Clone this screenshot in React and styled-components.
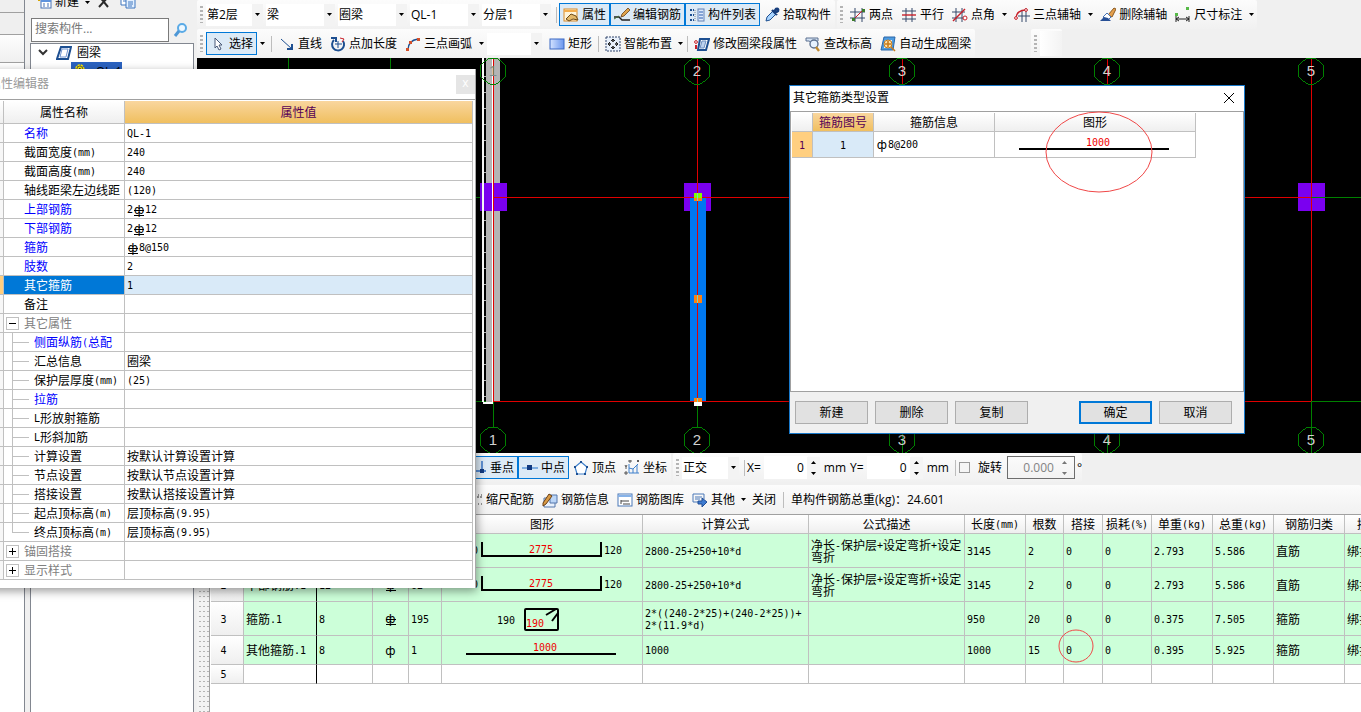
import { Fragment, useState } from "react";
import styled, { createGlobalStyle, css } from "styled-components";

const GlobalStyle = createGlobalStyle`
  * { box-sizing: border-box; }
  body {
    margin: 0;
    background: #f0f0f0;
    color: #000;
    font: 12px/16px "Open Sans", "Noto Sans CJK SC", sans-serif;
    overflow: hidden;
  }
  button, input, select { font: inherit; color: inherit; margin: 0; }
  table { border-collapse: separate; border-spacing: 0; table-layout: fixed; }
`;

const GRID = "#c0c0c0";
const headerFill = "linear-gradient(#ffffff, #efefef)";
const activeFill = "linear-gradient(#f9d69e, #f0bf5f)";

const Page = styled.div`
  position: relative;
  display: flex;
  height: 100vh;
  overflow: hidden;
`;

/* ---------- left side ---------- */

const NavRail = styled.nav`
  flex: 0 0 25px;
  margin-right: 5px;
  display: flex;
  flex-direction: column;
  background: #fff;
  border-right: 1px solid #828790;
`;

const NavBlock = styled.div`
  height: ${(p) => p.$h}px;
  background: ${(p) => (p.$light ? "linear-gradient(#fdfdfd, #f0f0f0)" : "#efefef")};
  border-bottom: 1px solid #a0a0a0;
`;

const TreePanel = styled.aside`
  flex: 0 0 164px;
  min-width: 0;
  margin-right: 3px;
  display: flex;
  flex-direction: column;
`;

const TreeTools = styled.div`
  display: flex;
  align-items: center;
  height: 32px;
  margin-top: -14px;
  padding-left: 2px;
`;

const SearchRow = styled.div`
  display: flex;
  align-items: center;
  height: 24px;
`;

const SearchInput = styled.input`
  flex: 0 0 138px;
  min-width: 0;
  width: 138px;
  height: 24px;
  margin-left: 1px;
  padding: 0 3px 3px;
  border: 1px solid #7a7a7a;
  background: #fff;
  outline: 0;
  &::placeholder { color: #777; opacity: 1; }
`;

const TreeBody = styled.div`
  flex: 1;
  margin-top: 1px;
  background: #fff;
  border: 1px solid #828790;
  border-bottom: 0;
`;

const TreeRow = styled.div`
  display: flex;
  align-items: center;
  gap: 5px;
  height: 18px;
  padding-left: ${(p) => (p.$child ? 40 : 6)}px;
  white-space: nowrap;
`;

const TreeSelected = styled.span`
  display: flex;
  align-items: flex-start;
  gap: 10px;
  width: 51px;
  height: 18px;
  padding-left: 3px;
  background: #2a62c0;
  line-height: 20px;
`;

/* ---------- toolbars ---------- */

const Main = styled.main`
  flex: 1;
  min-width: 0;
  display: flex;
  flex-direction: column;
`;

const ToolRow = styled.div`
  display: flex;
  flex: 0 0 29px;
  gap: 2px;
  ${(p) => p.$spaced && "margin-bottom: 3px;"}
`;

const ToolGroup = styled.div`
  display: flex;
  align-items: center;
  padding-left: ${(p) => p.$indent || 1}px;
  margin-left: ${(p) => p.$before || 0}px;
  ${(p) => p.$grow && "flex: 1;"}
  background: linear-gradient(#fcfcfc, #f1f1f1);
  border-radius: 2px;
  white-space: nowrap;
`;

const Grip = styled.span`
  width: 3px;
  height: 17px;
  margin: 0 3px 0 2px;
  background: repeating-linear-gradient(#b4b4b4 0 2px, transparent 2px 4px);
`;

const Sep = styled.span`
  width: 1px;
  height: 16px;
  margin: 0 ${(p) => (p.$tight ? 2 : 3)}px;
  background: #bdbdbd;
`;

const ToolButton = styled.button`
  display: flex;
  align-items: center;
  gap: 3px;
  height: 23px;
  padding: 0 3px;
  border: 1px solid ${(p) => (p.$on ? "#0078d7" : "transparent")};
  background: ${(p) => (p.$on ? "#dceaf6" : "transparent")};
`;

const CaretButton = styled.button`
  display: flex;
  align-items: center;
  justify-content: center;
  width: ${(p) => (p.$narrow ? 9 : 11)}px;
  height: 23px;
  padding: 0;
  border: 0;
  background: transparent;
`;

const ComboBox = styled.span`
  display: grid;
  grid-template-columns: 1fr 11px;
  align-items: center;
  width: ${(p) => p.$w}px;
  height: 22px;
  margin-right: 3px;
  background: linear-gradient(to left, #f3f3f3 11px, #fff 11px);
  & > svg { grid-area: 1 / 2; justify-self: center; pointer-events: none; }
`;

const ComboSelect = styled.select`
  grid-area: 1 / 1 / 2 / 3;
  height: 22px;
  padding: 0 12px 0 1px;
  border: 0;
  appearance: none;
  background: transparent;
  outline: 0;
`;

const Field = styled.label`
  display: flex;
  align-items: center;
  gap: 3px;
`;

const NumberInput = styled.input`
  width: 44px;
  height: 23px;
  padding: 0 4px;
  border: 0;
  background: #fff;
  text-align: right;
  outline: 0;
  &:disabled { background: transparent; color: #838383; width: 50px; }
`;

const Spinner = styled.span`
  display: flex;
  flex-direction: column;
  width: 13px;
  margin: 0 4px 0 -1px;
  background: #f5f5f5;
  ${(p) => p.$off && "background: transparent; margin: 0;"}
`;

const SpinButton = styled.button`
  display: flex;
  align-items: center;
  justify-content: center;
  height: 11px;
  padding: 0;
  border: 0;
  background: transparent;
  color: #000;
  &:disabled { color: #777; }
`;

const Unit = styled.span`
  margin-right: 4px;
`;

const RotateBox = styled.span`
  display: flex;
  align-items: center;
  width: 68px;
  height: 23px;
  margin: 0 2px 0 5px;
  border: 1px solid #6d6d6d;
`;

const CheckBox = styled.input`
  appearance: none;
  width: 11px;
  height: 11px;
  margin: 0 5px 0 1px;
  border: 1px solid #9a9a9a;
  background: #f5f5f5;
`;

const Total = styled.span`
  padding-left: 4px;
`;

const Blank = styled.span`
  width: 22px;
  height: 25px;
  background: linear-gradient(to right, #fff, #f3f3f3);
`;

/* ---------- drawing area and the rebar table ---------- */

const CanvasBox = styled.div`
  flex: 0 0 395px;
  background: #000;
  & svg { display: block; }
`;

const Bottom = styled.section`
  flex: 1;
  display: flex;
  min-height: 0;
`;

const Splitter = styled.div`
  flex: 0 0 13px;
  background: radial-gradient(circle, #b4b4b4 1px, transparent 1px) 1px 0 / 4px 5px #f3f3f3;
  border-right: 1px solid #a0a0a0;
`;

const SheetBox = styled.div`
  flex: 1;
  min-width: 0;
  overflow: hidden;
  background: #fff;
  border-top: 1px solid #a0a0a0;
  padding-left: 1px;
`;

const Sheet = styled.table`
  width: 1183px;
`;

const cellBase = css`
  padding: 0 2px;
  border: 0 solid ${GRID};
  border-width: 0 1px 1px 0;
  font: 12px/12px "Noto Sans CJK SC", sans-serif;
  overflow: hidden;
`;

const Th = styled.th`
  ${cellBase}
  height: ${(p) => p.$h || 19}px;
  padding: 0;
  background: ${(p) => (p.$on ? activeFill : headerFill)};
  color: ${(p) => (p.$on ? "#550055" : "#000")};
  text-align: center;
  white-space: nowrap;
`;

const RowNo = styled(Th)`
  padding-right: 7px;
`;

const Td = styled.td`
  ${cellBase}
  position: relative;
  height: ${(p) => p.$h}px;
  background: ${(p) => (p.$filled ? "#ccffd9" : "#fff")};
  text-align: ${(p) => (p.$center ? "center" : "left")};
  word-break: break-all;
  overflow: visible;
  ${(p) => p.$frozen && "border-right-color: #000;"}
  & > svg { display: block; margin: 0 auto; }
`;

const Ascii = styled.span`
  font-family: "DejaVu Sans Mono", monospace;
  font-size: 10px;
  line-height: 0;
  vertical-align: 1px;
`;

const Bar = styled.span`
  position: relative;
  display: inline-block;
  width: 12px;
  height: 12px;
  text-align: center;
  vertical-align: 0;
  font: 12px/12px "DejaVu Sans", sans-serif;
  ${(p) => p.$ribbed && css`
    &::after {
      content: "";
      position: absolute;
      left: 1px;
      right: 1px;
      top: 6px;
      height: 4px;
      border: solid #000;
      border-width: 1px 0;
    }
  `}
`;

const Mark = styled.svg`
  position: absolute;
  left: ${(p) => p.$x}px;
  top: ${(p) => p.$y}px;
  pointer-events: none;
`;

/* ---------- floating windows ---------- */

const EditorWindow = styled.section`
  position: absolute;
  left: -16px;
  top: 69px;
  width: 492px;
  padding-bottom: 8px;
  background: #fff;
  border-right: 1px solid #a8a8a8;
  box-shadow: 1px 3px 9px rgba(0, 0, 0, 0.4);
`;

const EditorTitle = styled.header`
  display: flex;
  align-items: center;
  justify-content: space-between;
  height: 31px;
  padding-left: 5px;
  border-bottom: 1px solid #a0a0a0;
  color: #999;
`;

const EditorClose = styled.button`
  width: 19px;
  height: 19px;
  padding: 0 0 2px;
  border: 0;
  background: #e5e5e5;
  color: #fff;
  line-height: 16px;
`;

const PropTable = styled.table`
  width: 489px;
  margin-top: 1px;
`;

const PropHead = styled.td`
  ${cellBase}
  background: ${(p) => (p.$on ? "#ffcf80" : "#f7f7f7")};
`;

const PropName = styled.td`
  ${cellBase}
  height: 19px;
  padding: 0;
  white-space: nowrap;
  background: ${(p) => (p.$on ? "#0078d7" : "#fff")};
  color: ${(p) => (p.$on ? "#fff" : p.$tone)};
  & > div { display: flex; align-items: center; height: 18px; }
`;

const PropIndent = styled.span`
  flex: 0 0 20px;
  display: flex;
  align-items: center;
  padding-left: 2px;
`;

const Branch = styled.span`
  flex: 0 0 22px;
  height: 19px;
  margin: 0 0 0 8px;
  align-self: flex-start;
  background:
    linear-gradient(${GRID}, ${GRID}) 0 0 / 1px ${(p) => (p.$last ? "10px" : "19px")} no-repeat,
    linear-gradient(${GRID}, ${GRID}) 0 9px / 17px 1px no-repeat;
`;

const Expander = styled.button`
  display: flex;
  align-items: center;
  justify-content: center;
  width: 13px;
  height: 13px;
  padding: 0;
  border: 1px solid ${GRID};
  background: #fff;
`;

const PropValue = styled.td`
  ${cellBase}
  background: ${(p) => (p.$on ? "#d9eaf8" : "#fff")};
`;

const Dialog = styled.section`
  position: absolute;
  left: 789px;
  top: 85px;
  width: 456px;
  background: #f0f0f0;
  border: 1px solid #1979ca;
  box-shadow: 0 2px 6px rgba(0, 0, 0, 0.4);
`;

const DialogTitle = styled.header`
  display: flex;
  align-items: center;
  justify-content: space-between;
  height: 25px;
  padding: 0 9px 1px 3px;
  background: #fff;
`;

const PlainButton = styled.button`
  display: flex;
  padding: 0;
  border: 0;
  background: transparent;
`;

const DialogBody = styled.div`
  height: 281px;
  padding: 1px;
  background: #fff;
  border: 1px solid #a0a0a0;
`;

const DialogTable = styled.table`
  width: 404px;
`;

const DialogCell = styled(Td)`
  ${(p) => p.$tone === "row" && "background: #ffcf80; color: #550055;"}
  ${(p) => p.$tone === "pick" && "background: #d9eaf8;"}
`;

const DialogFooter = styled.footer`
  display: flex;
  align-items: center;
  gap: 7px;
  height: 41px;
  padding: 0 12px 0 5px;
`;

const DialogButton = styled.button`
  width: 73px;
  height: 23px;
  padding: 0;
  border: ${(p) => (p.$primary ? "2px solid #0078d7" : "1px solid #adadad")};
  background: #e1e1e1;
  ${(p) => p.$primary && "margin-left: auto;"}
`;

/* ---------- icons ---------- */

const B = "#1d4f91";
const R = "#c8202a";

const ICONS = {
  pointer: <path d="M5 2v10l2-2 2 4 2-1-2-4h3z" fill="#fff" stroke="#4a5a78" />,
  line: <><path d="M2 3l11 10" stroke={B} /><path d="M13 8v5H8" stroke={B} strokeWidth="2" fill="none" /></>,
  addLength: <><path d="M4 4a6 6 0 1 0 9 1" fill="none" stroke={B} strokeWidth="2" /><path d="M1 2h5v4" fill="none" stroke={B} strokeWidth="2" /><path d="M8 5v7M5 8h7" stroke={B} /><path d="M10 2l4 1-2 3" fill="none" stroke={R} /></>,
  arc: <><path d="M3 14C3 8 6 4 13 3" fill="none" stroke={B} strokeWidth="1.4" /><rect x="1" y="12" width="3" height="3" fill="#d4502a" /><rect x="12" y="2" width="3" height="3" fill="#d4502a" /><rect x="4" y="5" width="3" height="3" fill="#d4502a" /></>,
  rect: <><rect x="1" y="3" width="14" height="10" fill="url(#rectFill)" stroke="#3b68c4" /><linearGradient id="rectFill"><stop stopColor="#d4e3ff" /><stop offset="1" stopColor="#6a96ee" /></linearGradient></>,
  smart: <><rect x="1" y="1" width="14" height="14" fill="#e8f0fb" stroke="#30456b" strokeDasharray="2 1" /><path d="M8 3v3M8 10v3M3 8h3M10 8h3" stroke="#222" strokeWidth="1.6" /><path d="M6 5l2-2 2 2M6 11l2 2 2-2M5 6L3 8l2 2M11 6l2 2-2 2" stroke="#222" /></>,
  editSeg: <><path d="M6 3h9l-3 11H4z" fill="#fff" stroke={B} strokeWidth="2" /><path d="M8 5h4l-2 7H6z" fill="#bcd2ef" stroke="#6d8fc0" /><circle cx="2" cy="6" r="1.4" fill="none" stroke={R} /><path d="M1 9h2v4H1z" fill={R} /></>,
  level: <><path d="M1 2h12v3L9 8 4 5H1z" fill="#d6e4f5" stroke="#5d7190" /><circle cx="9" cy="8" r="4" fill="#e6f2ff" stroke="#5d7190" strokeWidth="1.4" /><path d="M11 11l3 4" stroke="#c08a30" strokeWidth="2.4" /></>,
  auto: <><path d="M4 1h11l-2 13H1z" fill="#4d9be0" stroke="#2a66a8" /><path d="M5 4h7l-1 8H4z" fill="#e9f3fd" /><circle cx="8" cy="8" r="4" fill="#ffe2a8" stroke="#c77b1c" /><path d="M8 5v6M5 8h6M11 11l4 4" stroke="#c77b1c" strokeWidth="1.6" /></>,
  props: <><rect x="1" y="2" width="13" height="12" fill="#fff4d9" stroke="#d98a27" /><path d="M1 3h13v2H1z" fill="#f3ad4d" /><path d="M3 12l5-5 5 2 2 4-5-1-4 2z" fill="#e3b869" stroke="#6d4a18" /></>,
  editRebar: <><path d="M0 10h5l3 3h8" fill="none" stroke="#222" strokeWidth="1.4" /><path d="M7 10l1-3 6-6 2 2-6 6z" fill="#e0a44c" stroke="#694015" strokeWidth=".8" /><path d="M0 12l5-3" stroke="#3f6f39" /></>,
  list: <><path d="M1 3h4M1 8h4M1 13h4" stroke={B} strokeWidth="2" strokeDasharray="2 1" /><path d="M6 3v11" stroke="#8a8a8a" strokeDasharray="1 1" /><rect x="9" y="2" width="6" height="12" fill="#dce9fb" stroke="#6482b4" /><path d="M10 5h4M10 8h4M10 11h4" stroke="#2a5db0" /></>,
  dropper: <><path d="M2 14l1-4 6-6 3 3-6 6z" fill="#a8d4ff" stroke={B} /><path d="M8 3l5 5M10 5l2-3q3-1 2 2l-3 2" fill="none" stroke="#173e7d" strokeWidth="2.4" /></>,
  twoPoint: <><path d="M5 1v14M12 1v14M0 5h15M0 11h15" stroke="#34486b" /><path d="M3 13L13 3" stroke={R} /><path d="M2 11h3v3H2zM12 2h3v3h-3z" fill="#3d7c2b" /></>,
  parallel: <><path d="M1 4h14M1 12h14M5 1v14M11 1v14" stroke="#34486b" /><path d="M1 8h14" stroke={R} strokeWidth="1.4" /></>,
  pointAngle: <><path d="M4 1v14M10 1v14M0 5h13M0 11h14" stroke="#34486b" /><path d="M1 14L13 2" stroke={R} strokeWidth="1.4" /><circle cx="13" cy="11" r="2" fill="#fff" stroke={R} /></>,
  arcAxis: <><path d="M8 4v11M12 1v14M4 9h12" stroke="#34486b" /><path d="M2 11C2 6 6 3 12 3" fill="none" stroke={R} strokeWidth="1.4" /><circle cx="2" cy="11" r="1.4" fill="#fff" stroke={R} /><circle cx="12" cy="3" r="1.4" fill="#fff" stroke={R} /></>,
  eraser: <><path d="M8 8l6-7 2 1-4 8z" fill="#e4a04e" stroke="#8a5a20" /><path d="M3 10l4-4 4 4-4 4z" fill="#fff" stroke="#4773b5" /><path d="M0 14h11l-3-3-4-1z" fill="#274f95" /></>,
  dimension: <><path d="M1 9v6M14 9v6M1 12h13M4 10l-3 2 3 2M11 10l3 2-3 2" fill="none" stroke="#222" /><path d="M0 6h3v3H0zM11 0h3v3h-3z" fill="#56b947" /></>,
  perp: <><path d="M11 1v10M1 11h14" fill="none" stroke="#2a6cc4" strokeWidth="1.4" /><rect x="9" y="9" width="4" height="4" fill="#123a80" /></>,
  mid: <><path d="M0 8h16" stroke="#5794d8" strokeWidth="1.4" /><rect x="5" y="5" width="5" height="5" fill="#123a80" /></>,
  vertex: <><path d="M8 2l6 5-2 7H4L2 7z" fill="#fff" stroke="#3e80cc" strokeWidth="1.2" /><path d="M7 1h2v2H7zM13 6h2v2h-2zM1 6h2v2H1zM3 13h2v2H3zM11 13h2v2h-2z" fill={B} /></>,
  coord: <><path d="M5 4v9h10M5 8l4 1 5-5M9 9v4M13 5v8" fill="none" stroke="#3e80cc" /><path d="M1 5l1 2 1-2M2 7v2M1 12h2v2H1zM5 0h2v2H5zM13 0l2 2M15 0l-2 2" fill="none" stroke="#333" strokeWidth=".8" /></>,
  scale: <path d="M1 3h3M6 3h3M11 3h1M14 3h1M11 4v2M14 4v2M11 12h1M14 12h1" stroke="#333" />,
  info: <><path d="M2 6h11v9H2z" fill="#e9f1fc" stroke="#5577aa" /><path d="M8 3h7v8H8z" fill="#bcd6f7" stroke="#5577aa" /><path d="M1 11l6-9 3 2-6 8-3 2z" fill="#d99a45" stroke="#6a3f14" /></>,
  library: <><rect x="1" y="2" width="14" height="12" fill="#fff" stroke="#4a79b8" /><path d="M1 3h14v2H1z" fill="#86b2e8" /><path d="M4 8v4M4 9h8M6 12h7" stroke="#444" /></>,
  other: <><path d="M1 2h11v5M1 2v8h5M3 5h7M3 7h5" fill="none" stroke="#4a79b8" /><path d="M6 9h4V6l5 4-5 5v-3H6z" fill="#3e7bd0" stroke="#1f4c94" /></>,
  create: <><rect x="5" y="5" width="10" height="9" fill="#fff" stroke="#4a72b4" /><path d="M5 5h10v3H5z" fill="#5f93dd" /><path d="M7 10h2M11 10h2M7 12h2M11 12h2" stroke="#4a72b4" /><path d="M3 0v7M0 3h7" stroke="#d6a400" strokeWidth="2" /></>,
  remove: <path d="M3 2l9 11M13 2L3 13" stroke="#2b2b2b" strokeWidth="2" />,
  copy: <><path d="M1 2h7v9H1z" fill="#fff" stroke="#3f76bf" /><path d="M6 5h9v9H6z" fill="#e3f0ff" stroke="#3f76bf" /><path d="M8 8h5M8 10h5M8 12h4M3 5h3M3 7h3" stroke="#3f76bf" /></>,
  search: <><circle cx="9" cy="6" r="4" fill="#eef8ff" stroke="#5aaae6" strokeWidth="2" /><path d="M6 9l-4 5" stroke="#4d97d6" strokeWidth="3" /></>,
  ringBeam: <><path d="M5 2h10l-3 12H1z" fill="#fff" stroke={B} strokeWidth="2" /><path d="M6 4h6l-2 8H4z" fill="#fff" stroke="#6f93d0" /></>,
  gear: <><circle cx="8" cy="8" r="5" fill="none" stroke="#f4e400" strokeWidth="3" strokeDasharray="3 1" /><circle cx="8" cy="8" r="4" fill="#f4e400" stroke="#444" /><circle cx="8" cy="8" r="1.4" fill="#333" /></>,
};

const Icon = ({ name, size = 16 }) => (
  <svg width={size} height={size} viewBox="0 0 16 16" fill="none" aria-hidden="true">{ICONS[name]}</svg>
);

const Caret = ({ up }) => (
  <svg width="5" height="3" viewBox="0 0 5 3" aria-hidden="true">
    <path d={up ? "M0 3L2.5 0 5 3z" : "M0 0h5L2.5 3z"} fill="currentColor" />
  </svg>
);

/* ---------- small parts ---------- */

// Latin runs use the half-width mono face, the rest stays full width
const Mixed = ({ text }) =>
  text.split(/([\x20-\x7e]+|[фѱ])/).map((part, i) => {
    if (part === "ф") return <Bar key={i}>ф</Bar>;
    if (part === "ѱ") return <Bar key={i} $ribbed>ф</Bar>;
    return i % 2 ? <Ascii key={i}>{part}</Ascii> : <Fragment key={i}>{part}</Fragment>;
  });

const Tool = ({ icon, children, on }) => (
  <ToolButton type="button" $on={on} aria-label={children ? undefined : icon}>
    {icon && <Icon name={icon} />}
    {children}
  </ToolButton>
);

const More = ({ narrow }) => (
  <CaretButton type="button" aria-label="更多" $narrow={narrow}><Caret /></CaretButton>
);

const Combo = ({ value, label, width = 69 }) => (
  <ComboBox $w={width}>
    <ComboSelect aria-label={label} defaultValue={value}>
      <option>{value}</option>
    </ComboSelect>
    <Caret />
  </ComboBox>
);

const Spin = ({ off }) => (
  <Spinner $off={off}>
    <SpinButton type="button" aria-label="增加" disabled={off}><Caret up /></SpinButton>
    <SpinButton type="button" aria-label="减少" disabled={off}><Caret /></SpinButton>
  </Spinner>
);

/* ---------- drawing ---------- */

const AXES = [
  { id: 1, x: 296 },
  { id: 2, x: 500 },
  { id: 3, x: 705 },
  { id: 4, x: 910 },
  { id: 5, x: 1114 },
];

const ring = (x, y) =>
  Array.from({ length: 14 }, (_, i) => {
    const a = (Math.PI * 2 * i) / 14;
    return `${Math.round(x + 13 * Math.cos(a))},${Math.round(y + 13 * Math.sin(a))}`;
  }).join(" ");

const AxisLabel = ({ id, x, y, dim }) => (
  <>
    <polygon points={ring(x, y)} fill="none" stroke="#008000" />
    <text x={x} y={y + 5} fill={dim ? "#7c8c8c" : "#d0d0d0"} fontSize="15" fontFamily="Liberation Sans, sans-serif" textAnchor="middle">{id}</text>
  </>
);

const Drawing = () => (
  <svg width="100%" height="395" shapeRendering="crispEdges">
    <path d="M91.5 0v20M193.5 0v20M278 139.5h18M278 343.5h18" stroke="#008000" />
    <rect x="289" y="0" width="14" height="344" fill="#b4b4b4" />
    <path d="M286 0v344M286 344.5h10" stroke="#fff" strokeWidth="2" />
    <path d="M288 18v326" stroke="#b4b4b4" strokeWidth="2" strokeDasharray="1 15" />
    <path d="M295.5 0v344" stroke="#fff" />
    {AXES.map((a) => (
      <rect key={a.id} x={a.x - 13} y="125" width="27" height="28" fill="#7b00f0" />
    ))}
    <path d="M286 125v28" stroke="#fff" strokeWidth="2" />
    <path d="M295.5 125v28" stroke="#fff" />
    <rect x="493" y="140" width="16" height="204" fill="#0078f0" />
    {AXES.map((a) => (
      <Fragment key={a.id}>
        <line x1={a.x + 0.5} x2={a.x + 0.5} y1="0" y2="344" stroke="#e00000" />
        <line x1={a.x + 0.5} x2={a.x + 0.5} y1="344" y2={a.id > 2 ? 395 : 369} stroke="#008000" />
        <AxisLabel id={a.id} x={a.x} y={13} dim={a.id === 1} />
        <AxisLabel id={a.id} x={a.x} y={382} />
      </Fragment>
    ))}
    <line x1="1114" x2="100%" y1="139.5" y2="139.5" stroke="#008000" />
    <line x1="1114" x2="100%" y1="343.5" y2="343.5" stroke="#008000" />
    <path d="M296 139.5h818M296 343.5h818" stroke="#e00000" />
    <rect x="497" y="135" width="8" height="5" fill="#7fff00" />
    <rect x="497" y="140" width="8" height="3" fill="#ff8010" />
    <rect x="497" y="237" width="8" height="8" fill="#ff8010" />
    <rect x="497" y="340" width="8" height="4" fill="#ff8010" />
    <rect x="497" y="344" width="8" height="4" fill="#fff" />
    <path d="M500.5 135v8M500.5 237v8M500.5 340v4" stroke="#7ed8b0" />
  </svg>
);

const SvgText = ({ x, y, red, children }) => (
  <text x={x} y={y} fill={red ? "#f00000" : "#000"} fontSize="10" fontFamily="DejaVu Sans Mono, monospace">{children}</text>
);

const Shape = ({ kind }) => {
  if (kind === "u") {
    return (
      <svg width="166" height="24" viewBox="0 0 166 24">
        <path d="M23 3v14h119V3" fill="none" stroke="#000" strokeWidth="2" />
        <SvgText x={1} y={15}>120</SvgText>
        <SvgText x={70} y={14} red>2775</SvgText>
        <SvgText x={145} y={15}>120</SvgText>
      </svg>
    );
  }
  if (kind === "stirrup") {
    return (
      <svg width="90" height="28" viewBox="0 0 90 28">
        <rect x="28" y="4" width="33" height="21" rx="1" fill="none" stroke="#000" strokeWidth="2" />
        <path d="M49 10l10-6M55 16l6-8" stroke="#000" strokeWidth="2" />
        <SvgText x={0} y={19}>190</SvgText>
        <SvgText x={29} y={22} red>190</SvgText>
      </svg>
    );
  }
  return (
    <svg width="152" height="20" viewBox="0 0 152 20">
      <path d="M0 14h150" stroke="#000" strokeWidth="2" />
      <SvgText x={67} y={11} red>1000</SvgText>
    </svg>
  );
};

const COLS = [33, 73, 56, 36, 33, 201, 166, 156, 61, 38, 39, 49, 61, 61, 71, 49];
const HEADS = ["", "筋号", "直径(mm)", "级别", "图号", "图形", "计算公式", "公式描述", "长度(mm)", "根数", "搭接", "损耗(%)", "单重(kg)", "总重(kg)", "钢筋归类", "接头"];
const SHEET_ROWS = [
  { h: 34, shape: "u", cells: ["上部钢筋.1", "12", "ѱ", "62", "", "2800-25+250+10*d", "净长-保护层+设定弯折+设定弯折", "3145", "2", "0", "0", "2.793", "5.586", "直筋", "绑扎"] },
  { h: 34, shape: "u", cells: ["下部钢筋.1", "12", "ѱ", "62", "", "2800-25+250+10*d", "净长-保护层+设定弯折+设定弯折", "3145", "2", "0", "0", "2.793", "5.586", "直筋", "绑扎"] },
  { h: 34, shape: "stirrup", cells: ["箍筋.1", "8", "ѱ", "195", "", "2*((240-2*25)+(240-2*25))+2*(11.9*d)", "", "950", "20", "0", "0", "0.375", "7.505", "箍筋", "绑扎"] },
  { h: 29, shape: "line", marked: 9, cells: ["其他箍筋.1", "8", "ф", "1", "", "1000", "", "1000", "15", "0", "0", "0.395", "5.925", "箍筋", "绑扎"] },
  { h: 19, cells: Array(15).fill("") },
];

const RebarSheet = () => (
  <Sheet>
    <colgroup>{COLS.map((w, i) => <col key={i} width={w} />)}</colgroup>
    <thead>
      <tr>{HEADS.map((h, i) => <Th key={i}><Mixed text={h} /></Th>)}</tr>
    </thead>
    <tbody>
      {SHEET_ROWS.map((row, r) => (
        <tr key={r}>
          <RowNo $h={row.h}><Mixed text={String(r + 1)} /></RowNo>
          {row.cells.map((text, c) => (
            <Td key={c} $h={row.h} $filled={Boolean(row.shape)} $frozen={c === 0} $center={c === 2}>
              {c === 4 && row.shape ? <Shape kind={row.shape} /> : <Mixed text={text} />}
              {row.marked === c && (
                <Mark $x={-7} $y={-7} width="38" height="34">
                  <ellipse cx="19" cy="17" rx="17" ry="16" fill="none" stroke="#f04848" />
                </Mark>
              )}
            </Td>
          ))}
        </tr>
      ))}
    </tbody>
  </Sheet>
);

/* ---------- property editor ---------- */

const BLUE = "#0000ff";
const GRAY = "#808080";
const PROPS = [
  { name: "名称", value: "QL-1", tone: BLUE },
  { name: "截面宽度(mm)", value: "240" },
  { name: "截面高度(mm)", value: "240" },
  { name: "轴线距梁左边线距", value: "(120)" },
  { name: "上部钢筋", value: "2ѱ12", tone: BLUE },
  { name: "下部钢筋", value: "2ѱ12", tone: BLUE },
  { name: "箍筋", value: "ѱ8@150", tone: BLUE },
  { name: "肢数", value: "2", tone: BLUE },
  { name: "其它箍筋", value: "1", tone: BLUE },
  { name: "备注", value: "" },
  { name: "其它属性", value: "", tone: GRAY, group: "open" },
  { name: "侧面纵筋(总配", value: "", tone: BLUE, child: true },
  { name: "汇总信息", value: "圈梁", child: true },
  { name: "保护层厚度(mm)", value: "(25)", child: true },
  { name: "拉筋", value: "", tone: BLUE, child: true },
  { name: "L形放射箍筋", value: "", child: true },
  { name: "L形斜加筋", value: "", child: true },
  { name: "计算设置", value: "按默认计算设置计算", child: true },
  { name: "节点设置", value: "按默认节点设置计算", child: true },
  { name: "搭接设置", value: "按默认搭接设置计算", child: true },
  { name: "起点顶标高(m)", value: "层顶标高(9.95)", child: true },
  { name: "终点顶标高(m)", value: "层顶标高(9.95)", child: true, last: true },
  { name: "锚固搭接", value: "", tone: GRAY, group: "closed" },
  { name: "显示样式", value: "", tone: GRAY, group: "closed" },
];

const PropertyEditor = () => {
  const [selected, setSelected] = useState("其它箍筋");

  return (
    <EditorWindow>
      <EditorTitle>
        属性编辑器
        <EditorClose type="button" aria-label="关闭">x</EditorClose>
      </EditorTitle>
      <PropTable>
        <colgroup><col width="20" /><col width="121" /><col width="348" /></colgroup>
        <thead>
          <tr>
            <Th $h={23} />
            <Th $h={23}>属性名称</Th>
            <Th $h={23} $on>属性值</Th>
          </tr>
        </thead>
        <tbody>
          {PROPS.map((p) => (
            <tr key={p.name} onClick={() => setSelected(p.name)}>
              <PropHead $on={selected === p.name} />
              <PropName $on={selected === p.name} $tone={p.tone || "#000"}>
                <div>
                  {p.child ? <Branch $last={p.last} /> : (
                    <PropIndent>
                      {p.group && (
                        <Expander type="button" aria-label={p.name}>
                          <svg width="7" height="7"><path d={p.group === "open" ? "M0 3.5h7" : "M0 3.5h7M3.5 0v7"} stroke="#000" /></svg>
                        </Expander>
                      )}
                    </PropIndent>
                  )}
                  <span><Mixed text={p.name} /></span>
                </div>
              </PropName>
              <PropValue $on={selected === p.name}><Mixed text={p.value} /></PropValue>
            </tr>
          ))}
        </tbody>
      </PropTable>
    </EditorWindow>
  );
};

/* ---------- stirrup dialog ---------- */

const StirrupDialog = () => (
  <Dialog role="dialog" aria-label="其它箍筋类型设置">
    <DialogTitle>
      其它箍筋类型设置
      <PlainButton type="button" aria-label="关闭">
        <svg width="12" height="12"><path d="M1 1l10 10M11 1L1 11" stroke="#000" /></svg>
      </PlainButton>
    </DialogTitle>
    <DialogBody>
      <DialogTable>
        <colgroup><col width="21" /><col width="61" /><col width="121" /><col width="201" /></colgroup>
        <thead>
          <tr>
            <Th />
            <Th $on>箍筋图号</Th>
            <Th>箍筋信息</Th>
            <Th>图形</Th>
          </tr>
        </thead>
        <tbody>
          <tr>
            <DialogCell $h={26} $center $tone="row"><Mixed text="1" /></DialogCell>
            <DialogCell $h={26} $center $tone="pick"><Mixed text="1" /></DialogCell>
            <DialogCell $h={26}><Mixed text="ф8@200" /></DialogCell>
            <DialogCell $h={26}><Shape kind="line" /></DialogCell>
          </tr>
        </tbody>
      </DialogTable>
    </DialogBody>
    <DialogFooter>
      <DialogButton type="button">新建</DialogButton>
      <DialogButton type="button">删除</DialogButton>
      <DialogButton type="button">复制</DialogButton>
      <DialogButton type="button" $primary>确定</DialogButton>
      <DialogButton type="button">取消</DialogButton>
    </DialogFooter>
    <Mark $x={255} $y={25} width="110" height="84">
      <ellipse cx="54" cy="41" rx="53" ry="40" fill="none" stroke="#f04848" />
    </Mark>
  </Dialog>
);

const App = () => (
  <Page>
    <GlobalStyle />
    <NavRail>
      <NavBlock $h={13} />
      <NavBlock $h={22} />
      <NavBlock $h={28} $light />
    </NavRail>

    <TreePanel>
      <TreeTools>
        <Tool icon="create">新建</Tool>
        <More narrow />
        <Tool icon="remove" />
        <Tool icon="copy" />
      </TreeTools>
      <SearchRow>
        <SearchInput type="text" placeholder="搜索构件..." aria-label="搜索构件" />
        <Tool icon="search" />
      </SearchRow>
      <TreeBody>
        <TreeRow>
          <svg width="14" height="8"><path d="M2 1l4 4 4-4" fill="none" stroke="#333" strokeWidth="2" /></svg>
          <Icon name="ringBeam" />
          圈梁
        </TreeRow>
        <TreeRow $child>
          <TreeSelected><Icon name="gear" size={14} />QL-1</TreeSelected>
        </TreeRow>
      </TreeBody>
    </TreePanel>

    <Main>
      <ToolRow>
        <ToolGroup>
          <Grip />
          <Combo value="第2层" label="楼层" width={57} />
          <Combo value="梁" label="类别" />
          <Combo value="圈梁" label="构件类型" />
          <Combo value="QL-1" label="构件" />
          <Combo value="分层1" label="分层" />
          <Sep $tight />
          <Tool icon="props" on>属性</Tool>
          <Tool icon="editRebar" on>编辑钢筋</Tool>
          <Tool icon="list" on>构件列表</Tool>
          <Tool icon="dropper">拾取构件</Tool>
        </ToolGroup>
        <ToolGroup>
          <Grip />
          <Tool icon="twoPoint">两点</Tool>
          <Tool icon="parallel">平行</Tool>
          <Tool icon="pointAngle">点角</Tool>
          <More />
          <Tool icon="arcAxis">三点辅轴</Tool>
          <More />
          <Tool icon="eraser">删除辅轴</Tool>
          <Tool icon="dimension">尺寸标注</Tool>
          <More />
        </ToolGroup>
      </ToolRow>

      <ToolRow>
        <ToolGroup>
          <Grip />
          <Tool icon="pointer" on>选择</Tool>
          <More />
          <Sep />
          <Tool icon="line">直线</Tool>
          <Tool icon="addLength">点加长度</Tool>
          <Tool icon="arc">三点画弧</Tool>
          <More />
          <Combo value="" label="画法" width={55} />
          <Tool icon="rect">矩形</Tool>
          <Sep $tight />
          <Tool icon="smart">智能布置</Tool>
          <More narrow />
          <Sep $tight />
          <Tool icon="editSeg">修改圈梁段属性</Tool>
          <Tool icon="level">查改标高</Tool>
          <Tool icon="auto">自动生成圈梁</Tool>
        </ToolGroup>
        <ToolGroup $before={54}>
          <Grip />
          <Blank />
        </ToolGroup>
      </ToolRow>

      <CanvasBox><Drawing /></CanvasBox>

      <ToolRow $spaced>
        <ToolGroup $indent={270}>
          <Tool icon="perp" on>垂点</Tool>
          <Tool icon="mid" on>中点</Tool>
          <Tool icon="vertex">顶点</Tool>
          <Tool icon="coord">坐标</Tool>
        </ToolGroup>
        <ToolGroup>
          <Grip />
          <Combo value="正交" label="捕捉方式" width={57} />
          <Sep $tight />
          <Field>X=<NumberInput type="text" defaultValue="0" /></Field>
          <Spin />
          <Unit>mm</Unit>
          <Field>Y=<NumberInput type="text" defaultValue="0" /></Field>
          <Spin />
          <Unit>mm</Unit>
          <Sep $tight />
          <Field><CheckBox type="checkbox" />旋转</Field>
          <RotateBox>
            <NumberInput type="text" defaultValue="0.000" aria-label="旋转角度" disabled />
            <Spin off />
          </RotateBox>
          °
        </ToolGroup>
      </ToolRow>

      <ToolRow>
        <ToolGroup $grow $indent={266}>
          <Tool icon="scale">缩尺配筋</Tool>
          <Tool icon="info">钢筋信息</Tool>
          <Tool icon="library">钢筋图库</Tool>
          <Tool icon="other">其他</Tool>
          <More narrow />
          <Tool>关闭</Tool>
          <Sep />
          <Total>单构件钢筋总重(kg)：24.601</Total>
        </ToolGroup>
      </ToolRow>

      <Bottom>
        <Splitter />
        <SheetBox><RebarSheet /></SheetBox>
      </Bottom>
    </Main>

    <PropertyEditor />
    <StirrupDialog />
  </Page>
);

export default App;
